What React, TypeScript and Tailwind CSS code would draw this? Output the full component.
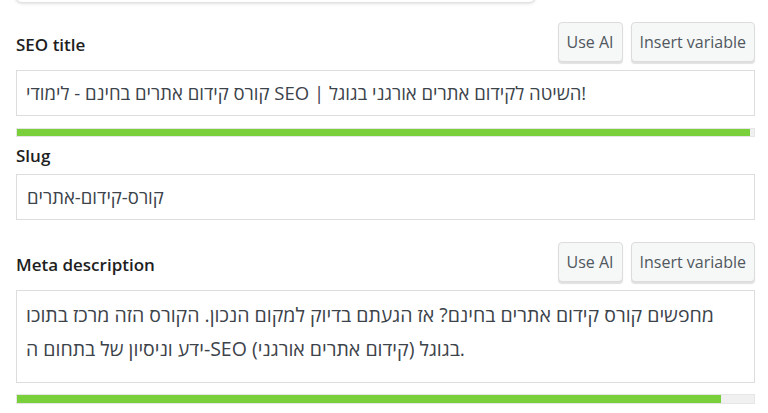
import React from 'react';

const FONT = { fontFamily: '"Open Sans", "Liberation Sans", "DejaVu Sans", sans-serif' };

function ActionButtons() {
  return (
    <div className="flex gap-2">
      <button className="h-[40px] px-[8px] rounded-[4px] border border-[#dcdcde] bg-[#f6f7f7] text-[16px] text-[#50575e] shadow-[0_2px_1px_rgba(0,0,0,0.12)]">
        Use AI
      </button>
      <button className="h-[40px] px-[8px] rounded-[4px] border border-[#dcdcde] bg-[#f6f7f7] text-[16px] text-[#50575e] shadow-[0_2px_1px_rgba(0,0,0,0.12)]">
        Insert variable
      </button>
    </div>
  );
}

function ProgressBar({ value, className }: { value: number; className: string }) {
  return (
    <div className={`bg-[#f0f0f1] border border-[#e6e6e6] ${className}`}>
      <div className="h-full bg-[#7ad03a]" style={{ width: `${value}%` }} />
    </div>
  );
}

export default function App() {
  return (
    <div className="min-h-screen bg-white overflow-hidden" style={FONT}>
      {/* bottom of the box above, cut off by the viewport */}
      <div className="ml-[15px] -mt-[21px] h-[24px] w-[521px] rounded-b-[7px] border border-[#e2e2e2] bg-white shadow-[0_1px_3px_rgba(0,0,0,0.12)]" />

      <div className="ml-4 w-[739px] pt-[19px]">
        {/* SEO title */}
        <div className="flex items-end justify-between mb-2">
          <label className="pb-[5px] text-[17px] leading-[24px] font-semibold text-[#1e1e1e]">SEO title</label>
          <ActionButtons />
        </div>
        <div dir="ltr" className="h-[46px] flex items-center px-[9px] border border-[#dddddd] text-[18.5px] text-[#3c434a] whitespace-nowrap">
          קורס קידום אתרים בחינם - לימודי SEO | השיטה לקידום אתרים אורגני בגוגל!
        </div>
        <ProgressBar value={99.5} className="mt-[12px] h-[9px]" />

        {/* Slug */}
        <label className="block mt-[7px] text-[17px] leading-[24px] font-semibold text-[#1e1e1e]">Slug</label>
        <div dir="ltr" className="mt-[6px] h-[46px] flex items-center px-[10px] border border-[#dddddd] text-[18.5px] text-[#3c434a]">
          קורס-קידום-אתרים
        </div>

        {/* Meta description */}
        <div className="flex items-end justify-between mt-[22px] mb-2">
          <label className="pb-[5px] text-[17px] leading-[24px] font-semibold text-[#1e1e1e]">Meta description</label>
          <ActionButtons />
        </div>
        <div dir="ltr" className="h-[93px] pt-[7px] pl-[9px] pr-[16px] border border-[#dddddd] text-[19.5px] leading-[34px] text-[#3c434a]">
          מחפשים קורס קידום אתרים בחינם? אז הגעתם בדיוק למקום הנכון. הקורס הזה מרכז בתוכו ידע וניסיון של בתחום ה-SEO (קידום אתרים אורגני) בגוגל.
        </div>
        <ProgressBar value={95.5} className="mt-[11px] h-[10px]" />
      </div>
    </div>
  );
}
